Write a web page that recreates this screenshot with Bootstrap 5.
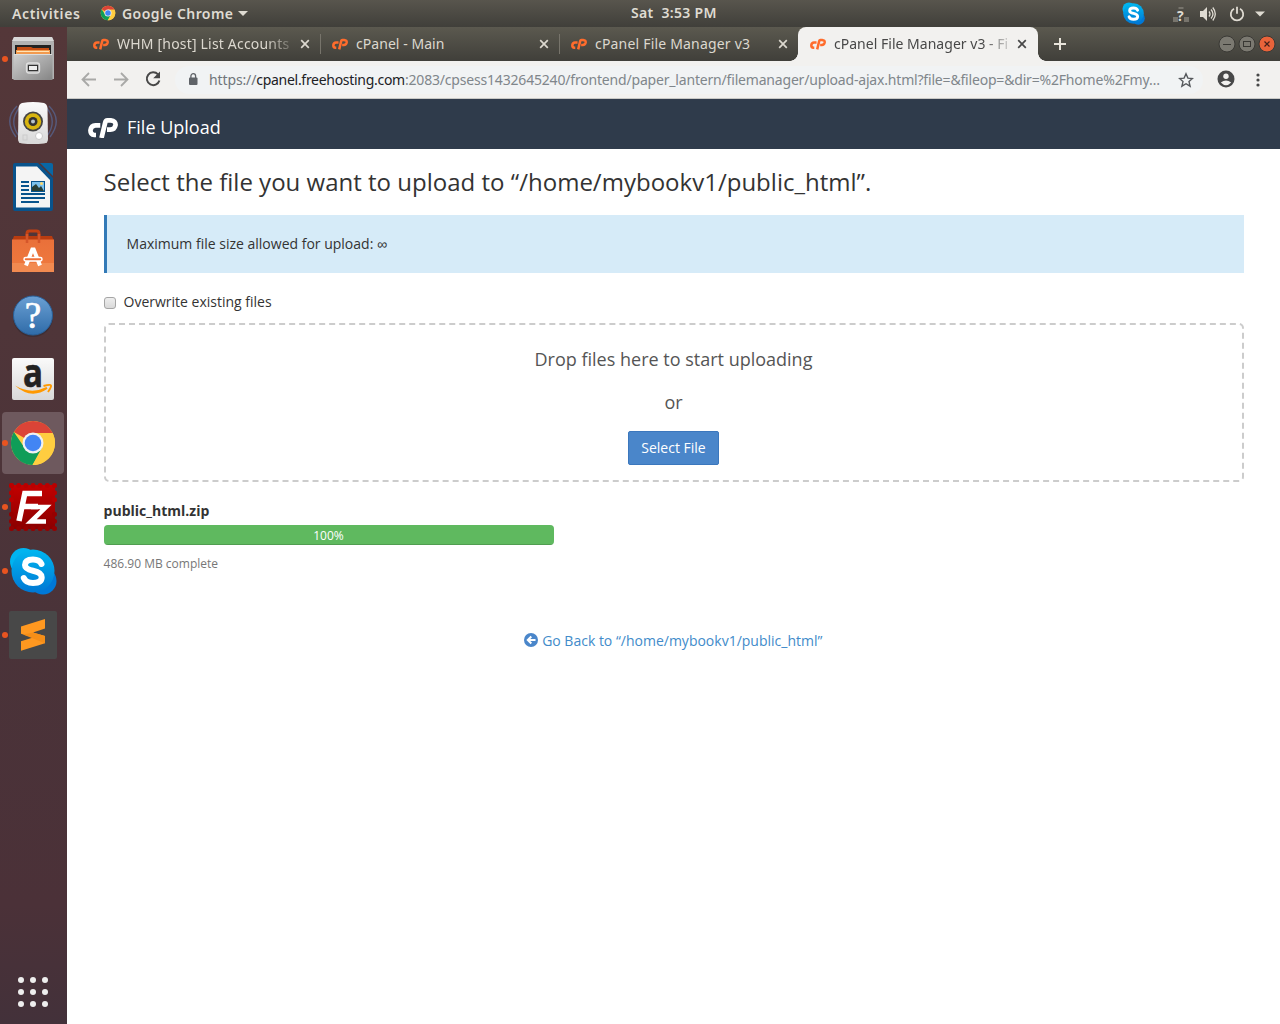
<!DOCTYPE html>
<html lang="en">
<head>
<meta charset="utf-8">
<title>cPanel File Manager v3 - File Upload</title>
<link href="https://cdn.jsdelivr.net/npm/bootstrap@5.3.0/dist/css/bootstrap.min.css" rel="stylesheet">
<style>
body{font-family:"Open Sans","Noto Sans",sans-serif;font-size:14px;line-height:20px;color:#333;height:1024px;overflow:hidden;background:#fff}
svg{display:block;flex:none}
.shell-bar{height:27px;background:linear-gradient(#58554d,#403f3a);color:#dfdbd2;font:600 14px/27px "Noto Sans",sans-serif;position:relative;white-space:pre}
.shell-bar>svg{margin-top:-1px}
.shell-act{padding-left:12px;width:100px;letter-spacing:.6px}
.shell-app{margin-left:6px;width:110px;letter-spacing:.42px}
.shell-clock{position:absolute;left:631px;top:-1px;letter-spacing:.32px}
.dock{width:67px;background:linear-gradient(#543739,#4a3339 60%,#4b3138 88%,#43313a)}
.dock-item{height:64px;position:relative}
.dock-item.running::before{content:"";position:absolute;left:2px;top:29px;width:6px;height:6px;border-radius:50%;background:#e95420}
.dock-item.current .dock-tile{background:#6e595e;border-radius:4px}
.dock-tile{width:62px;height:62px;margin:1px 3px 1px 2px;display:flex;align-items:center;justify-content:center}
.apps{height:64px;padding-right:1px}
.strip{height:34px;background:linear-gradient(#5b594f,#403f3a);padding-left:14px;font:14px/34px "Noto Sans",sans-serif;color:#dcd8cf}
.tab-cell{width:239px;padding-left:12px;position:relative}
.tab-cell.ruled::after{content:"";position:absolute;right:0;top:7px;width:1px;height:20px;background:#77746b}
.tab-label{width:174px;margin-left:8px;white-space:nowrap}
.tab-label.fade-end{-webkit-mask-image:linear-gradient(90deg,#000 148px,transparent 182px)}
.t1,.t3{letter-spacing:.19px}
.t2{letter-spacing:.05px}
.t4{letter-spacing:.02px}
.tab-cell.tab-on{width:240px;background:#f2f1ef;color:#484848;border-radius:8px 8px 0 0}
.tab-on::before,.tab-on::after{content:"";position:absolute;bottom:0;width:8px;height:8px}
.tab-on::before{left:-8px;background:radial-gradient(circle at 0 0,transparent 7.5px,#f2f1ef 8px)}
.tab-on::after{right:-8px;background:radial-gradient(circle at 100% 0,transparent 7.5px,#f2f1ef 8px)}
.addr{height:38px;background:#f2f1ef;border-bottom:1px solid #c9c9c6}
.omni{width:1028px;height:28px;border-radius:14px;background:#f1f3f4;font:14px/28px "Noto Sans",sans-serif;color:#80868b}
.omni-text{width:956px;margin-left:11px;white-space:nowrap}
.u1{letter-spacing:-.12px;color:#70757a}
.u2{letter-spacing:-.29px;color:#202124}
.u3{letter-spacing:-.185px}
.cp-head{height:50px;background:#2f3b4b;color:#fff;font-size:18px;padding-left:21px;padding-top:7px}
.cp-head span{margin:-2px 0 0 9px}
.page{padding:18px 36px 0 37px}
.page h2{font-size:24px;line-height:30px;margin:0 0 18px -.4px;font-weight:400;letter-spacing:.01px}
.note{height:58px;background:#d6ebf8;border-left:3px solid #337ab7;padding:19px 19.600px}
.infin{font-family:"Noto Sans",sans-serif}
.over{margin-top:19px;gap:7.500px;height:20px}
.over input{appearance:none;width:12px;height:12px;margin:2px 0 0;border:1px solid #a5a5a5;border-radius:3px;background:linear-gradient(#eee,#d9d9d9)}
.drop{margin-top:11px;height:159px;border:2px dashed #ccc;border-radius:5px;font-size:18px;color:#555;padding-right:1px}
.drop p{margin:0;line-height:26px}
.btn-pick{--bs-btn-bg:#4a86ca;--bs-btn-color:#fff;--bs-btn-border-color:#3b77bd;border-radius:2px;font-size:14px;line-height:20px;padding:6px 0;height:34px;width:91px}
.fname{margin:19px 0 0 -.4px;font-weight:700}
.meter{width:450px;height:20px;border-radius:4px;margin-top:4px;font-size:12px}
.meter .progress-bar{background:#5fb95f;box-shadow:inset 0 -1px 0 rgba(0,0,0,.15);font-size:12px;padding:1px 1px 0 0}
.done{font-size:12px;color:#777;margin:9px 0 0 -.4px}
.back{margin-top:57px;color:#428bca;gap:4px;padding-right:1.500px}
.back svg{margin-top:-2px}
</style>
<script src="https://cdn.jsdelivr.net/npm/bootstrap@5.3.0/dist/js/bootstrap.bundle.min.js"></script>
</head>
<body class="d-flex flex-column">
<svg width="0" height="0" class="position-absolute">
<defs>
<linearGradient id="gCab" x1="0" y1="0" x2="1" y2="1"><stop stop-color="#d0d0d0"/><stop offset="1" stop-color="#858585"/></linearGradient>
<linearGradient id="gOr" x1="0" y1="0" x2="0" y2="1"><stop stop-color="#e9703a"/><stop offset="1" stop-color="#f07a3e"/></linearGradient>
<linearGradient id="gHelp" x1="0" y1="0" x2="0" y2="1"><stop stop-color="#6aa0d4"/><stop offset="1" stop-color="#2f6ba8"/></linearGradient>
<linearGradient id="gSky" x1="0" y1="0" x2="0" y2="1"><stop stop-color="#00b7f0"/><stop offset="1" stop-color="#0078d4"/></linearGradient>
<linearGradient id="gFz" x1="0" y1="0" x2="0" y2="1"><stop stop-color="#c40000"/><stop offset="1" stop-color="#8a0000"/></linearGradient>
<linearGradient id="gWh" x1="0" y1="0" x2="0" y2="1"><stop stop-color="#fafafa"/><stop offset="1" stop-color="#d8d8d8"/></linearGradient>
<symbol id="cp" viewBox="0 0 30 20"><g fill="none" stroke="currentColor" stroke-width="4.700"><path d="M12.300 7.300H7.500Q3.200 7.500 2.500 12Q2.200 16.700 6.300 17H8"/><path d="M13.500 20L17.200 4.600Q17.700 2.500 19.500 2.400H22.800Q28 3 27.500 7.200Q26.600 11.500 22.300 11.700H19"/></g></symbol>
<symbol id="chrome" viewBox="0 0 48 48"><circle cx="24" cy="24" r="22" fill="#ffcd40"/><path d="M24 24L4.900 13A22 22 0 0 1 43.100 13L43.600 14H24z" fill="#db4437"/><path d="M4.900 13A22 22 0 0 0 23.500 46L33.500 29.500L24 24L15 28z" fill="#0f9d58"/><path d="M24 14H43.600A22 22 0 0 1 23.500 46L32.700 29z" fill="#ffcd40"/><circle cx="24" cy="24" r="10.500" fill="#f1f1f1"/><circle cx="24" cy="24" r="8.300" fill="#4285f4"/></symbol>
<symbol id="skype" viewBox="0 0 48 48"><circle cx="14.500" cy="14.500" r="13.500" fill="#00b4f0"/><circle cx="34" cy="34" r="13.500" fill="#0078d7"/><circle cx="24" cy="24" r="21.500" fill="url(#gSky)"/><path d="M32.500 17Q30.500 12.500 24 12.500Q16 12.500 16 18Q16 22 24 23.700Q32.700 25.500 32.700 30.300Q32.700 36 24 36Q17 36 14.800 31" fill="none" stroke="#fff" stroke-width="6" stroke-linecap="round"/></symbol>
<symbol id="x" viewBox="0 0 10 10"><path d="M1.200 1.200l7.600 7.600M8.800 1.200L1.200 8.800" stroke="currentColor" stroke-width="1.700"/></symbol>
</defs>
</svg>

<header class="shell-bar d-flex align-items-center flex-shrink-0">
<div class="shell-act">Activities</div>
<svg width="16" height="16"><use href="#chrome"/></svg>
<div class="shell-app">Google Chrome</div>
<svg width="20" height="8" viewBox="0 0 20 8"><path d="M6 2h10l-5 5z" fill="#dfdbd2"/></svg>
<div class="shell-clock">Sat  3:53 PM</div>
<div class="ms-auto d-flex align-items-center">
<svg width="23" height="23"><use href="#skype"/></svg>
<svg width="18" height="18" viewBox="0 0 18 18" style="margin-left:28px"><path d="M0 12h5v5H0zM11 12h5v5h-5zM5.500 2h5v2h-5z" fill="#77746c"/><text x="4" y="15.500" font-size="14" font-weight="700" font-family="Open Sans" fill="#dfdbd2">?</text></svg>
<svg width="18" height="18" viewBox="0 0 18 18" class="ms-2"><path d="M1 6h3l4-4v14l-4-4H1z" fill="#dfdbd2"/><path d="M10 6.500q2 2.500 0 5M12 4.500q4 4.500 0 9M13.800 2.500q5 6.500 0 13" fill="none" stroke="#dfdbd2" stroke-width="1.300"/></svg>
<svg width="16" height="16" viewBox="0 0 16 16" style="margin-left:12px"><path d="M5 2.800A6.200 6.200 0 1 0 11 2.800M8 .8v7" fill="none" stroke="#dfdbd2" stroke-width="1.800"/></svg>
<svg width="10" height="6" viewBox="0 0 10 6" style="margin:0 15px 0 10px"><path d="M0 .5h10l-5 5z" fill="#dfdbd2"/></svg>
</div>
</header>

<div class="d-flex flex-grow-1">
<nav class="dock d-flex flex-column flex-shrink-0">
<div class="dock-item running"><div class="dock-tile"><svg width="48" height="48" viewBox="0 0 48 48"><path d="M5 2h38l2 5v37h-42V7z" fill="#b2b2b2"/><path d="M5 2h38l2 4H3z" fill="#d8d8d8"/><path d="M6 10h36v11H6z" fill="#222"/><path d="M8 12h14l2 1h16v8H8z" fill="#c44d13"/><path d="M7 15h34v6H7z" fill="#f29a4e"/><path d="M8 16.500h32" stroke="#ffe3b5"/><path d="M4.500 19h39v26h-39z" fill="url(#gCab)"/><path d="M5 19.500h38" stroke="#ddd"/><rect x="17.500" y="28" width="13" height="10" rx="2.500" fill="#a8a8a8" stroke="#e0e0e0" stroke-width="1.300"/><rect x="19.500" y="30.500" width="9" height="5" fill="#eee" stroke="#333"/></svg></div></div>
<div class="dock-item"><div class="dock-tile"><svg width="50" height="48" viewBox="0 0 50 48"><g fill="none" stroke="#565a7c" stroke-width="1.400"><path d="M9 7Q-5 21 8 38M12 8Q0 22 11 37M41 7Q55 21 42 38M38 8Q50 22 39 37"/></g><path d="M14 4q11-2 22 0q3 1 3.500 5l.5 31q0 4-4 4.500q-11 1-22 0q-4-.5-4-4.500l.5-31q.5-4 3.500-5z" fill="url(#gWh)"/><circle cx="25" cy="22.500" r="10" fill="#444"/><circle cx="25" cy="22.500" r="8.200" fill="#d8b510"/><circle cx="25" cy="22.500" r="4.500" fill="#333"/><circle cx="25" cy="22.500" r="2" fill="#b8c4cc"/><circle cx="31" cy="37" r="3.500" fill="#fff" stroke="#c8c8c8"/><rect x="15" y="36" width="4" height="5" fill="none" stroke="#ccc"/></svg></div></div>
<div class="dock-item"><div class="dock-tile"><svg width="42" height="48" viewBox="0 0 42 48"><path d="M3 0h23l15 15v31a2 2 0 0 1-2 2H3a2 2 0 0 1-2-2V2a2 2 0 0 1 2-2z" fill="#08538c"/><path d="M28 0h11q2 0 2 2v11z" fill="#0967a5"/><path d="M4 3.500h21L38 17v27.500H4z" fill="#f4f4f4"/><path d="M9 19h8M9 23h8M9 27h8M9 31h24M9 35h24M9 39h18" stroke="#08538c" stroke-width="2"/><rect x="19.500" y="18.500" width="13" height="10" fill="#7cc2ee" stroke="#08538c"/><path d="M20 28v-4l4-3 3 4 2-2 3 5z" fill="#293f36"/><circle cx="29.500" cy="20.500" r="1.500" fill="#ffd86b"/></svg></div></div>
<div class="dock-item"><div class="dock-tile pt-1"><svg width="44" height="48" viewBox="0 0 44 48"><path d="M16 11V4.500Q16 2 18.500 2h7Q28 2 28 4.500V11" fill="none" stroke="#c34113" stroke-width="3"/><path d="M3 7h38l2 5H1z" fill="#b83c10"/><path d="M1 10.500h42v32.500H1z" fill="url(#gOr)"/><path d="M1 34h42v9H1z" fill="#f28a50"/><path d="M16 5v9M28 5v9" stroke="#d5562a" stroke-width="2.500"/><path d="M15 36.500l6.300-16h1.400l6.300 16" fill="none" stroke="#fff" stroke-width="4"/><rect x="13" y="28.500" width="18" height="3.500" rx="1.700" fill="#ef7038" stroke="#fff" stroke-width="1.500"/></svg></div></div>
<div class="dock-item"><div class="dock-tile"><svg width="44" height="44" viewBox="0 0 44 44"><circle cx="22" cy="24" r="20" fill="#30282f" opacity=".5"/><circle cx="22" cy="22.500" r="19.500" fill="url(#gHelp)" stroke="#285f98"/><text x="22" y="34.500" text-anchor="middle" font-family="Liberation Serif" font-size="37" stroke="#fff" stroke-width=".7" fill="#fff">?</text></svg></div></div>
<div class="dock-item"><div class="dock-tile"><svg width="42" height="42" viewBox="0 0 42 42" overflow="visible"><rect width="42" height="42" rx="2" fill="url(#gWh)"/><text x="11" y="28.500" font-family="Open Sans" font-weight="700" font-size="39" fill="#222" stroke="#222" stroke-width=".6" textLength="20" lengthAdjust="spacingAndGlyphs">a</text><path d="M3 27.500Q19 37 34.500 29l1 1.800Q19 42 3 27.500z" fill="#f90"/><path d="M31.500 28q7-2 7.500-.5t-3 6.500" fill="none" stroke="#f90" stroke-width="1.900"/></svg></div></div>
<div class="dock-item running current"><div class="dock-tile"><svg width="48" height="48"><use href="#chrome"/></svg></div></div>
<div class="dock-item running"><div class="dock-tile"><svg width="48" height="48" viewBox="0 0 48 48"><rect x="2" y="2" width="44" height="44" fill="url(#gFz)"/><path d="M2.500 2.500h43v21" fill="none" stroke="#b80000" stroke-width="5" stroke-linecap="round" stroke-dasharray="0 7.170"/><path d="M2.500 2.500v21" fill="none" stroke="#b80000" stroke-width="5" stroke-linecap="round" stroke-dasharray="0 7.170"/><path d="M2.500 45.500h43v-20M2.500 45.500v-20" fill="none" stroke="#960000" stroke-width="5" stroke-linecap="round" stroke-dasharray="0 7.170"/><path d="M10 38L15.800 10.500H33M13 23.500H29" fill="none" stroke="#fff" stroke-width="5.500"/><path d="M22 24H37L22 38.500H37" fill="none" stroke="#fff" stroke-width="4.600"/></svg></div></div>
<div class="dock-item running"><div class="dock-tile"><svg width="48" height="48"><use href="#skype"/></svg></div></div>
<div class="dock-item running"><div class="dock-tile"><svg width="48" height="48" viewBox="0 0 48 48"><rect width="48" height="48" rx="2" fill="#484848"/><path d="M12 15.500L36 8v9.500l-12 3.900 12 3.600v7.300l-24 7.400V30.300l12-3.900-12-3.600z" fill="#ff9820"/><path d="M14 23.400l22 8.900V25l-12-3.600z" fill="#f58e18"/></svg></div></div>
<div class="apps mt-auto d-flex justify-content-center align-items-center"><svg width="32" height="32" viewBox="0 0 32 32" fill="#eee"><circle cx="4" cy="4" r="3"/><circle cx="16" cy="4" r="3"/><circle cx="28" cy="4" r="3"/><circle cx="4" cy="16" r="3"/><circle cx="16" cy="16" r="3"/><circle cx="28" cy="16" r="3"/><circle cx="4" cy="28" r="3"/><circle cx="16" cy="28" r="3"/><circle cx="28" cy="28" r="3"/></svg></div>
</nav>

<div class="d-flex flex-column flex-grow-1">
<div class="strip d-flex">
<div class="tab-cell ruled d-flex align-items-center" style="width:240px"><svg width="16" height="12" color="#ff6c2c"><use href="#cp"/></svg><div class="tab-label fade-end t1">WHM [host] List Accounts</div><svg width="10" height="10" style="margin-left:9px"><use href="#x"/></svg></div>
<div class="tab-cell ruled d-flex align-items-center"><svg width="16" height="12" color="#ff6c2c" style="margin-left:-1px"><use href="#cp"/></svg><div class="tab-label t2">cPanel - Main</div><svg width="10" height="10" style="margin-left:9px"><use href="#x"/></svg></div>
<div class="tab-cell d-flex align-items-center" style="width:238px"><svg width="16" height="12" color="#ff6c2c" style="margin-left:-1px"><use href="#cp"/></svg><div class="tab-label t3">cPanel File Manager v3</div><svg width="10" height="10" style="margin-left:9px"><use href="#x"/></svg></div>
<div class="tab-cell tab-on d-flex align-items-center"><svg width="16" height="12" color="#ff6c2c"><use href="#cp"/></svg><div class="tab-label fade-end t4">cPanel File Manager v3 - Fi</div><svg width="10" height="10" style="margin-left:9px"><use href="#x"/></svg></div>
<svg width="12" height="12" viewBox="0 0 12 12" class="align-self-center" style="margin-left:16px"><path d="M6 0v12M0 6h12" stroke="#e8e4db" stroke-width="2"/></svg>
<div class="ms-auto d-flex align-items-center" style="gap:2px;padding-right:4px">
<svg width="18" height="18" viewBox="0 0 18 18"><circle cx="9" cy="9" r="8" fill="#7b7971" stroke="#3a3935"/><path d="M5 9.500h8" stroke="#383733"/></svg>
<svg width="18" height="18" viewBox="0 0 18 18"><circle cx="9" cy="9" r="8" fill="#7b7971" stroke="#3a3935"/><rect x="5.500" y="6.500" width="7" height="5" fill="none" stroke="#383733"/></svg>
<svg width="18" height="18" viewBox="0 0 18 18"><circle cx="9" cy="9" r="8" fill="#e9633a" stroke="#3a3935"/><path d="M6.500 6.500l5 5M11.500 6.500l-5 5" stroke="#45201a" stroke-width="1.200"/></svg>
</div>
</div>
<div class="addr d-flex align-items-center">
<svg width="16" height="16" viewBox="0 0 16 16" style="margin-left:14px"><path d="M15 7.500H2M8 1L1.500 7.500 8 14" fill="none" stroke="#a9a9a7" stroke-width="1.800"/></svg>
<svg width="16" height="16" viewBox="0 0 16 16" style="margin-left:16px"><path d="M1 7.500h13M8 1l6.500 6.500L8 14" fill="none" stroke="#a9a9a7" stroke-width="1.800"/></svg>
<svg width="16" height="16" viewBox="0 0 16 16" style="margin:-1px 0 0 16px"><path d="M13 3.400A6.400 6.400 0 1 0 14.400 9.500" fill="none" stroke="#484848" stroke-width="2"/><path d="M15 .5v6.800H8.200z" fill="#484848"/></svg>
<div class="omni d-flex align-items-center" style="margin-left:14px">
<svg width="10" height="13" viewBox="0 0 10 13" style="margin-left:13px"><rect x="1" y="4.500" width="8.500" height="7.500" rx="1" fill="#5f6368"/><path d="M2.900 5V3a2.300 2.300 0 0 1 4.700 0v2" fill="none" stroke="#5f6368" stroke-width="1.300"/></svg>
<div class="omni-text"><span class="u1">https://</span><span class="u2">cpanel.freehosting.com</span><span class="u3">:2083/cpsess1432645240/frontend/paper_lantern/filemanager/upload-ajax.html?file=&amp;fileop=&amp;dir=%2Fhome%2Fmy…</span></div>
<svg width="16" height="16" viewBox="0 0 16 16" style="margin-left:13px"><path d="M8 1.800l1.900 4.300 4.600.4-3.500 3.100 1.100 4.600L8 11.700l-4.100 2.500L5 9.600 1.500 6.500l4.600-.4z" fill="none" stroke="#55585c" stroke-width="1.400"/></svg>
</div>
<svg width="18" height="18" viewBox="0 0 18 18" style="margin:-2px 0 0 14px"><circle cx="9" cy="9" r="8.500" fill="#484848"/><circle cx="9" cy="6.300" r="2.700" fill="#f2f1ef"/><path d="M3.800 12.600q5.200-4 10.400 0q-5.200 5.400-10.400 0z" fill="#f2f1ef"/></svg>
<svg width="4" height="14" viewBox="0 0 4 14" style="margin-left:21px" fill="#484848"><circle cx="2" cy="2" r="1.600"/><circle cx="2" cy="7" r="1.600"/><circle cx="2" cy="12" r="1.600"/></svg>
</div>
<div class="cp-head d-flex align-items-center"><svg width="30" height="20"><use href="#cp"/></svg><span>File Upload</span></div>
<main class="page">
<h2>Select the file you want to upload to “/home/mybookv1/public_html”.</h2>
<div class="note">Maximum file size allowed for upload: <span class="infin">∞</span></div>
<label class="over d-flex align-items-center"><input type="checkbox">Overwrite existing files</label>
<div class="drop d-flex flex-column align-items-center">
<p style="margin-top:21px">Drop files here to start uploading</p>
<p style="margin-top:17px">or</p>
<button class="btn btn-pick" style="margin-top:16px">Select File</button>
</div>
<div class="fname">public_html.zip</div>
<div class="progress meter"><div class="progress-bar" style="width:100%">100%</div></div>
<div class="done">486.90 MB complete</div>
<div class="back d-flex justify-content-center align-items-center"><svg width="14" height="14" viewBox="0 0 14 14"><circle cx="7" cy="7" r="7" fill="#4a86ca"/><path d="M11.500 7H4M7.300 3.500L3.800 7l3.500 3.500" fill="none" stroke="#fff" stroke-width="2"/></svg><span>Go Back to “/home/mybookv1/public_html”</span></div>
</main>
</div>
</div>
</body>
</html>
